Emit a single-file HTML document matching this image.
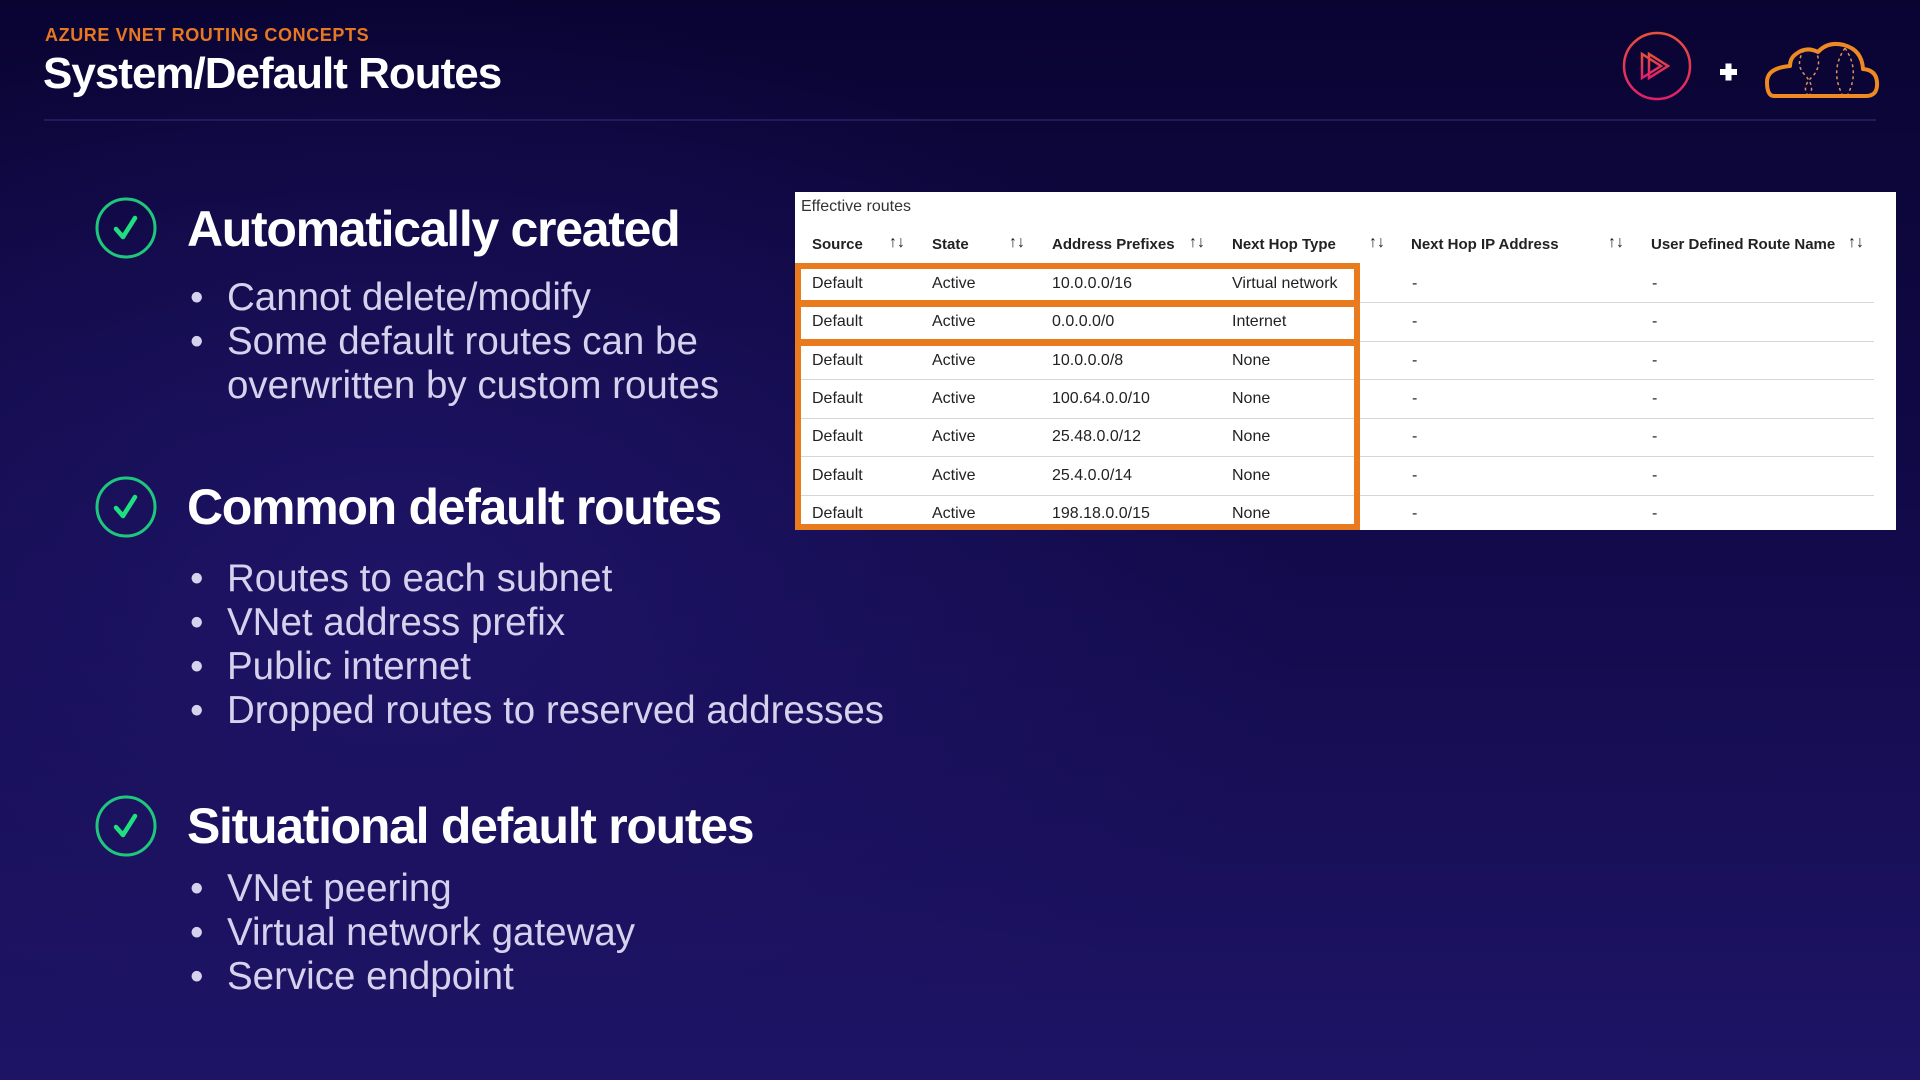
<!DOCTYPE html>
<html><head><meta charset="utf-8"><style>
*{margin:0;padding:0;box-sizing:border-box}
body{width:1920px;height:1080px;overflow:hidden;font-family:"Liberation Sans",sans-serif;
background:radial-gradient(ellipse 900px 600px at 400px 600px,#1e1466 0%,rgba(30,20,102,0) 100%),linear-gradient(180deg,#0a0433 0%,#120a4a 50%,#1e1466 100%);position:relative}
.abs{position:absolute}
.kicker{left:45px;top:25px;color:#e87722;font-weight:bold;font-size:18px;letter-spacing:0.6px}
.title{left:43px;top:49px;color:#fff;font-weight:bold;font-size:44px;letter-spacing:-1px}
.hr{left:44px;top:119px;width:1832px;height:2px;background:#231a5c}
.chk{width:62px;height:62px}
.h{color:#fff;font-weight:bold;font-size:50px;letter-spacing:-1.3px;left:187px;line-height:60px}
.b{color:#d6d2ee;font-size:38.5px;left:190px;line-height:44px}
.b div{position:relative;padding-left:37px}
.b div.d:before{content:"•";position:absolute;left:0;top:0}
.tbl{left:795px;top:192px;width:1101px;height:338px;background:#fff;font-family:"Liberation Sans",sans-serif;color:#222}
.tbl .t{position:absolute;font-size:16px;white-space:nowrap}
.tbl .hd{font-weight:bold;font-size:15px;top:44px!important}
.sep{position:absolute;height:1px;background:#d6d6d6}
.or{position:absolute;background:#ea7a1e}
</style></head><body>
<div class="abs kicker">AZURE VNET ROUTING CONCEPTS</div>
<div class="abs title">System/Default Routes</div>
<div class="abs hr"></div>

<svg class="abs" style="left:1620px;top:30px" width="260" height="75" viewBox="0 0 260 75">
<defs><linearGradient id="g" x1="0" y1="0" x2="0" y2="1"><stop offset="0" stop-color="#e8503a"/><stop offset="1" stop-color="#e0206a"/></linearGradient></defs>
<circle cx="37" cy="36" r="33" fill="none" stroke="url(#g)" stroke-width="2.5"/>
<path d="M22 24 L22 48 L41 36 Z M29 24 L29 48 L48 36 Z" fill="none" stroke="url(#g)" stroke-width="2.5" stroke-linejoin="miter"/>
<rect x="100" y="39" width="17" height="6" fill="#fff"/><rect x="105.5" y="33.5" width="6" height="17" fill="#fff"/>
<path d="M154 66 L246 66 Q258 66 257 52 Q256 40 243 39 Q242 20 224 15 Q208 11 198 22 Q186 16 176 24 Q170 28 170 36 Q147 38 147 52 Q147 66 154 66 Z" fill="none" stroke="#ef8a23" stroke-width="4" stroke-linejoin="round"/>
<path d="M184 20 Q175 34 184 44 Q195 56 190 64 M195 20 Q203 34 193 46 Q182 56 187 64 M225 18 Q210 40 222 64 M225 18 Q240 40 228 64" fill="none" stroke="#d9925a" stroke-width="1.5" stroke-dasharray="3 3"/>
</svg>

<svg class="abs chk" style="left:95px;top:197px" viewBox="0 0 62 62"><circle cx="31" cy="31" r="29" fill="none" stroke="#1fc77c" stroke-width="3"/><path d="M21 32 L28 40 L40 21" fill="none" stroke="#1fe07e" stroke-width="4.5" stroke-linecap="round" stroke-linejoin="round"/></svg>
<svg class="abs chk" style="left:95px;top:476px" viewBox="0 0 62 62"><circle cx="31" cy="31" r="29" fill="none" stroke="#1fc77c" stroke-width="3"/><path d="M21 32 L28 40 L40 21" fill="none" stroke="#1fe07e" stroke-width="4.5" stroke-linecap="round" stroke-linejoin="round"/></svg>
<svg class="abs chk" style="left:95px;top:795px" viewBox="0 0 62 62"><circle cx="31" cy="31" r="29" fill="none" stroke="#1fc77c" stroke-width="3"/><path d="M21 32 L28 40 L40 21" fill="none" stroke="#1fe07e" stroke-width="4.5" stroke-linecap="round" stroke-linejoin="round"/></svg>

<div class="abs h" style="top:199px">Automatically created</div>
<div class="abs b" style="top:276px"><div class="d">Cannot delete/modify</div><div class="d">Some default routes can be</div><div>overwritten by custom routes</div></div>
<div class="abs h" style="top:477px">Common default routes</div>
<div class="abs b" style="top:557px"><div class="d">Routes to each subnet</div><div class="d">VNet address prefix</div><div class="d">Public internet</div><div class="d">Dropped routes to reserved addresses</div></div>
<div class="abs h" style="top:796px">Situational default routes</div>
<div class="abs b" style="top:867px"><div class="d">VNet peering</div><div class="d">Virtual network gateway</div><div class="d">Service endpoint</div></div>

<div class="abs tbl">
<div class="t" style="left:6px;top:6px;font-size:16px;color:#333">Effective routes</div>
<div class="t hd" style="left:17px;top:43px">Source</div><div class="t" style="left:94px;top:42px">↑↓</div>
<div class="t hd" style="left:137px;top:43px">State</div><div class="t" style="left:214px;top:42px">↑↓</div>
<div class="t hd" style="left:257px;top:43px">Address Prefixes</div><div class="t" style="left:394px;top:42px">↑↓</div>
<div class="t hd" style="left:437px;top:43px">Next Hop Type</div><div class="t" style="left:574px;top:42px">↑↓</div>
<div class="t hd" style="left:616px;top:43px">Next Hop IP Address</div><div class="t" style="left:813px;top:42px">↑↓</div>
<div class="t hd" style="left:856px;top:43px">User Defined Route Name</div><div class="t" style="left:1053px;top:42px">↑↓</div>

<div class="sep" style="left:565px;width:514px;top:110px"></div>
<div class="sep" style="left:5px;width:1074px;top:149px"></div>
<div class="sep" style="left:5px;width:1074px;top:187px"></div>
<div class="sep" style="left:5px;width:1074px;top:226px"></div>
<div class="sep" style="left:5px;width:1074px;top:264px"></div>
<div class="sep" style="left:5px;width:1074px;top:303px"></div>

<div class="or" style="left:0;top:71px;width:565px;height:6px"></div>
<div class="or" style="left:0;top:108px;width:565px;height:7px"></div>
<div class="or" style="left:0;top:147px;width:565px;height:7px"></div>
<div class="or" style="left:0;top:332px;width:565px;height:6px"></div>
<div class="or" style="left:0;top:71px;width:6px;height:267px"></div>
<div class="or" style="left:559px;top:71px;width:6px;height:267px"></div>

<div class="t" style="left:17px;top:83px">Default</div><div class="t" style="left:137px;top:83px">Active</div><div class="t" style="left:257px;top:83px">10.0.0.0/16</div><div class="t" style="left:437px;top:83px">Virtual network</div><div class="t" style="left:617px;top:83px">-</div><div class="t" style="left:857px;top:83px">-</div>
<div class="t" style="left:17px;top:121px">Default</div><div class="t" style="left:137px;top:121px">Active</div><div class="t" style="left:257px;top:121px">0.0.0.0/0</div><div class="t" style="left:437px;top:121px">Internet</div><div class="t" style="left:617px;top:121px">-</div><div class="t" style="left:857px;top:121px">-</div>
<div class="t" style="left:17px;top:160px">Default</div><div class="t" style="left:137px;top:160px">Active</div><div class="t" style="left:257px;top:160px">10.0.0.0/8</div><div class="t" style="left:437px;top:160px">None</div><div class="t" style="left:617px;top:160px">-</div><div class="t" style="left:857px;top:160px">-</div>
<div class="t" style="left:17px;top:198px">Default</div><div class="t" style="left:137px;top:198px">Active</div><div class="t" style="left:257px;top:198px">100.64.0.0/10</div><div class="t" style="left:437px;top:198px">None</div><div class="t" style="left:617px;top:198px">-</div><div class="t" style="left:857px;top:198px">-</div>
<div class="t" style="left:17px;top:236px">Default</div><div class="t" style="left:137px;top:236px">Active</div><div class="t" style="left:257px;top:236px">25.48.0.0/12</div><div class="t" style="left:437px;top:236px">None</div><div class="t" style="left:617px;top:236px">-</div><div class="t" style="left:857px;top:236px">-</div>
<div class="t" style="left:17px;top:275px">Default</div><div class="t" style="left:137px;top:275px">Active</div><div class="t" style="left:257px;top:275px">25.4.0.0/14</div><div class="t" style="left:437px;top:275px">None</div><div class="t" style="left:617px;top:275px">-</div><div class="t" style="left:857px;top:275px">-</div>
<div class="t" style="left:17px;top:313px">Default</div><div class="t" style="left:137px;top:313px">Active</div><div class="t" style="left:257px;top:313px">198.18.0.0/15</div><div class="t" style="left:437px;top:313px">None</div><div class="t" style="left:617px;top:313px">-</div><div class="t" style="left:857px;top:313px">-</div>
</div>
</body></html>
